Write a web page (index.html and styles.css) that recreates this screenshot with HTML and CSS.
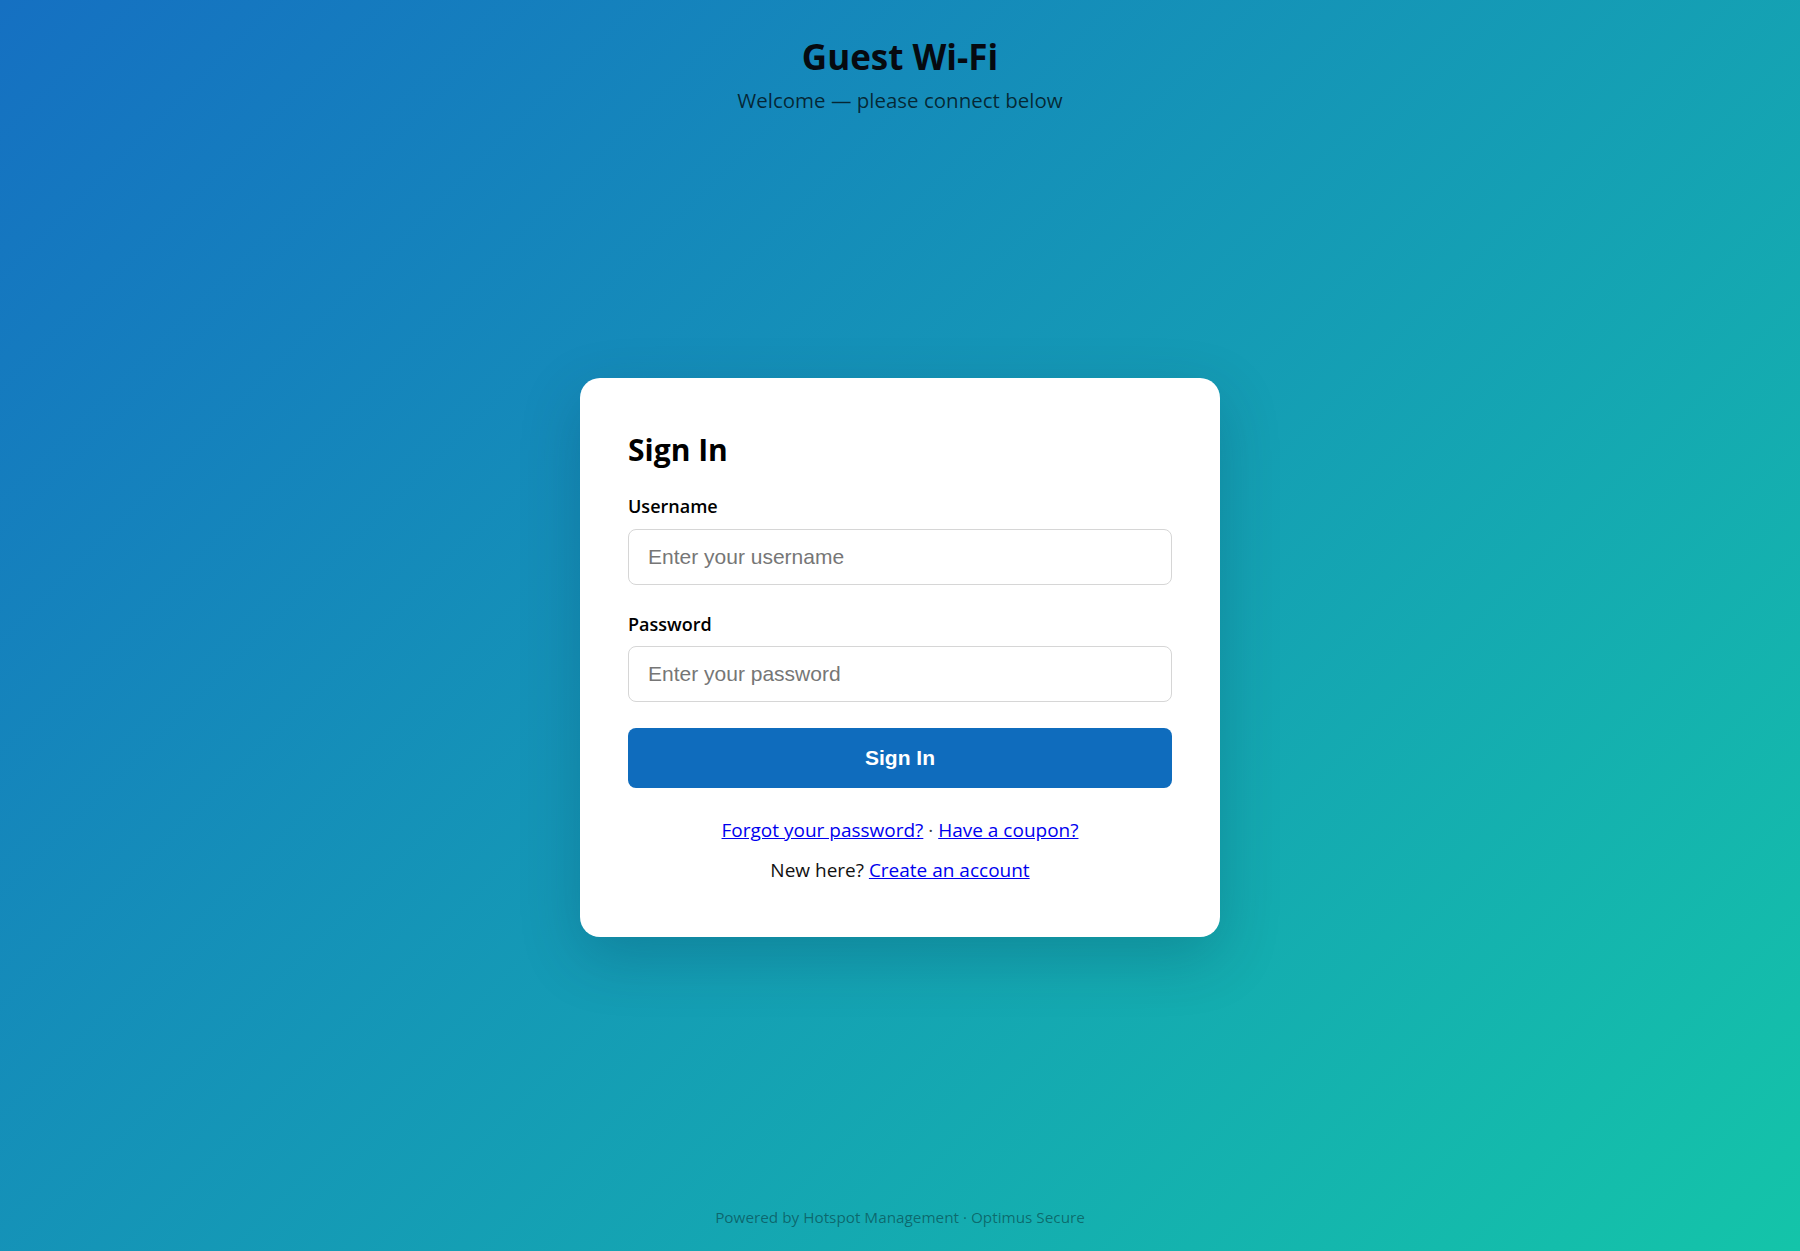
FILE: index.html
```html
<!DOCTYPE html>
<html lang="en">
<head>
<meta charset="utf-8">
<title>Guest Wi-Fi</title>
<link rel="stylesheet" href="styles.css">
</head>
<body>
<div class="page">
  <header class="top">
    <h1 class="brand">Guest Wi-Fi</h1>
    <p class="tagline">Welcome — please connect below</p>
  </header>
  <main class="main">
    <form class="card" onsubmit="return false;">
      <h2 class="card-title">Sign In</h2>
      <label class="field-label" for="username">Username</label>
      <input class="field-input" id="username" type="text" placeholder="Enter your username">
      <label class="field-label second" for="password">Password</label>
      <input class="field-input" id="password" type="password" placeholder="Enter your password">
      <button class="submit" type="submit">Sign In</button>
      <p class="links first-links"><a href="#">Forgot your password?</a> <span class="dot">·</span> <a href="#">Have a coupon?</a></p>
      <p class="links second-links">New here? <a href="#">Create an account</a></p>
    </form>
  </main>
  <footer class="foot">Powered by Hotspot Management · Optimus Secure</footer>
</div>
</body>
</html>
```
FILE: styles.css
```css
* { box-sizing: border-box; }
html, body { margin: 0; padding: 0; height: 100%; }
body {
  font-family: "Open Sans", "Noto Sans", sans-serif;
  background: linear-gradient(135deg, #1570c2 0%, #14c4a9 100%);
  color: #111;
}
.page {
  min-height: 100vh;
  display: flex;
  flex-direction: column;
}
.top {
  text-align: center;
  padding-top: 37px;
}
.brand {
  margin: 0;
  font-size: 35px;
  line-height: 40px;
  font-weight: 700;
  color: #060a10;
}
.tagline {
  margin: 9px 0 0;
  font-size: 20.5px;
  line-height: 28px;
  color: rgba(0, 0, 0, 0.72);
}
.main {
  flex: 1;
  display: flex;
  align-items: center;
  justify-content: center;
}
.card {
  width: 640px;
  background: #fff;
  border-radius: 20px;
  padding: 48px;
  display: flex;
  flex-direction: column;
  box-shadow: 0 20px 60px rgba(0, 40, 70, 0.22);
}
.card-title {
  margin: 6px 0 0;
  font-size: 30px;
  line-height: 36px;
  font-weight: 700;
  color: #000;
}
.field-label {
  margin-top: 26px;
  margin-bottom: 11px;
  font-size: 18px;
  line-height: 24px;
  font-weight: 600;
  color: #000;
}
.field-label.second {
  margin-top: 27px;
  margin-bottom: 10px;
}
.field-input {
  height: 56px;
  border: 1px solid #d6d6d6;
  border-radius: 8px;
  padding: 0 19px;
  font-family: "Liberation Sans", Arial, sans-serif;
  font-size: 21px;
  color: #222;
  background: #fff;
  outline: none;
}
.field-input::placeholder { color: #767676; }
.submit {
  margin-top: 26px;
  height: 60px;
  border: none;
  border-radius: 8px;
  background: #0f6cbd;
  color: #fff;
  font-family: "Liberation Sans", Arial, sans-serif;
  font-size: 21px;
  font-weight: 700;
  cursor: pointer;
}
.links {
  margin: 0;
  text-align: center;
  font-size: 19px;
  line-height: 26px;
  color: #111;
}
.first-links { margin-top: 29px; }
.second-links { margin-top: 14px; margin-bottom: 6px; }
.links a { color: #0000ee; text-decoration: underline; }
.dot { color: #444; }
.foot {
  text-align: center;
  padding: 6px 0 24px;
  font-size: 15.3px;
  line-height: 20px;
  color: rgba(0, 0, 0, 0.4);
}
```
